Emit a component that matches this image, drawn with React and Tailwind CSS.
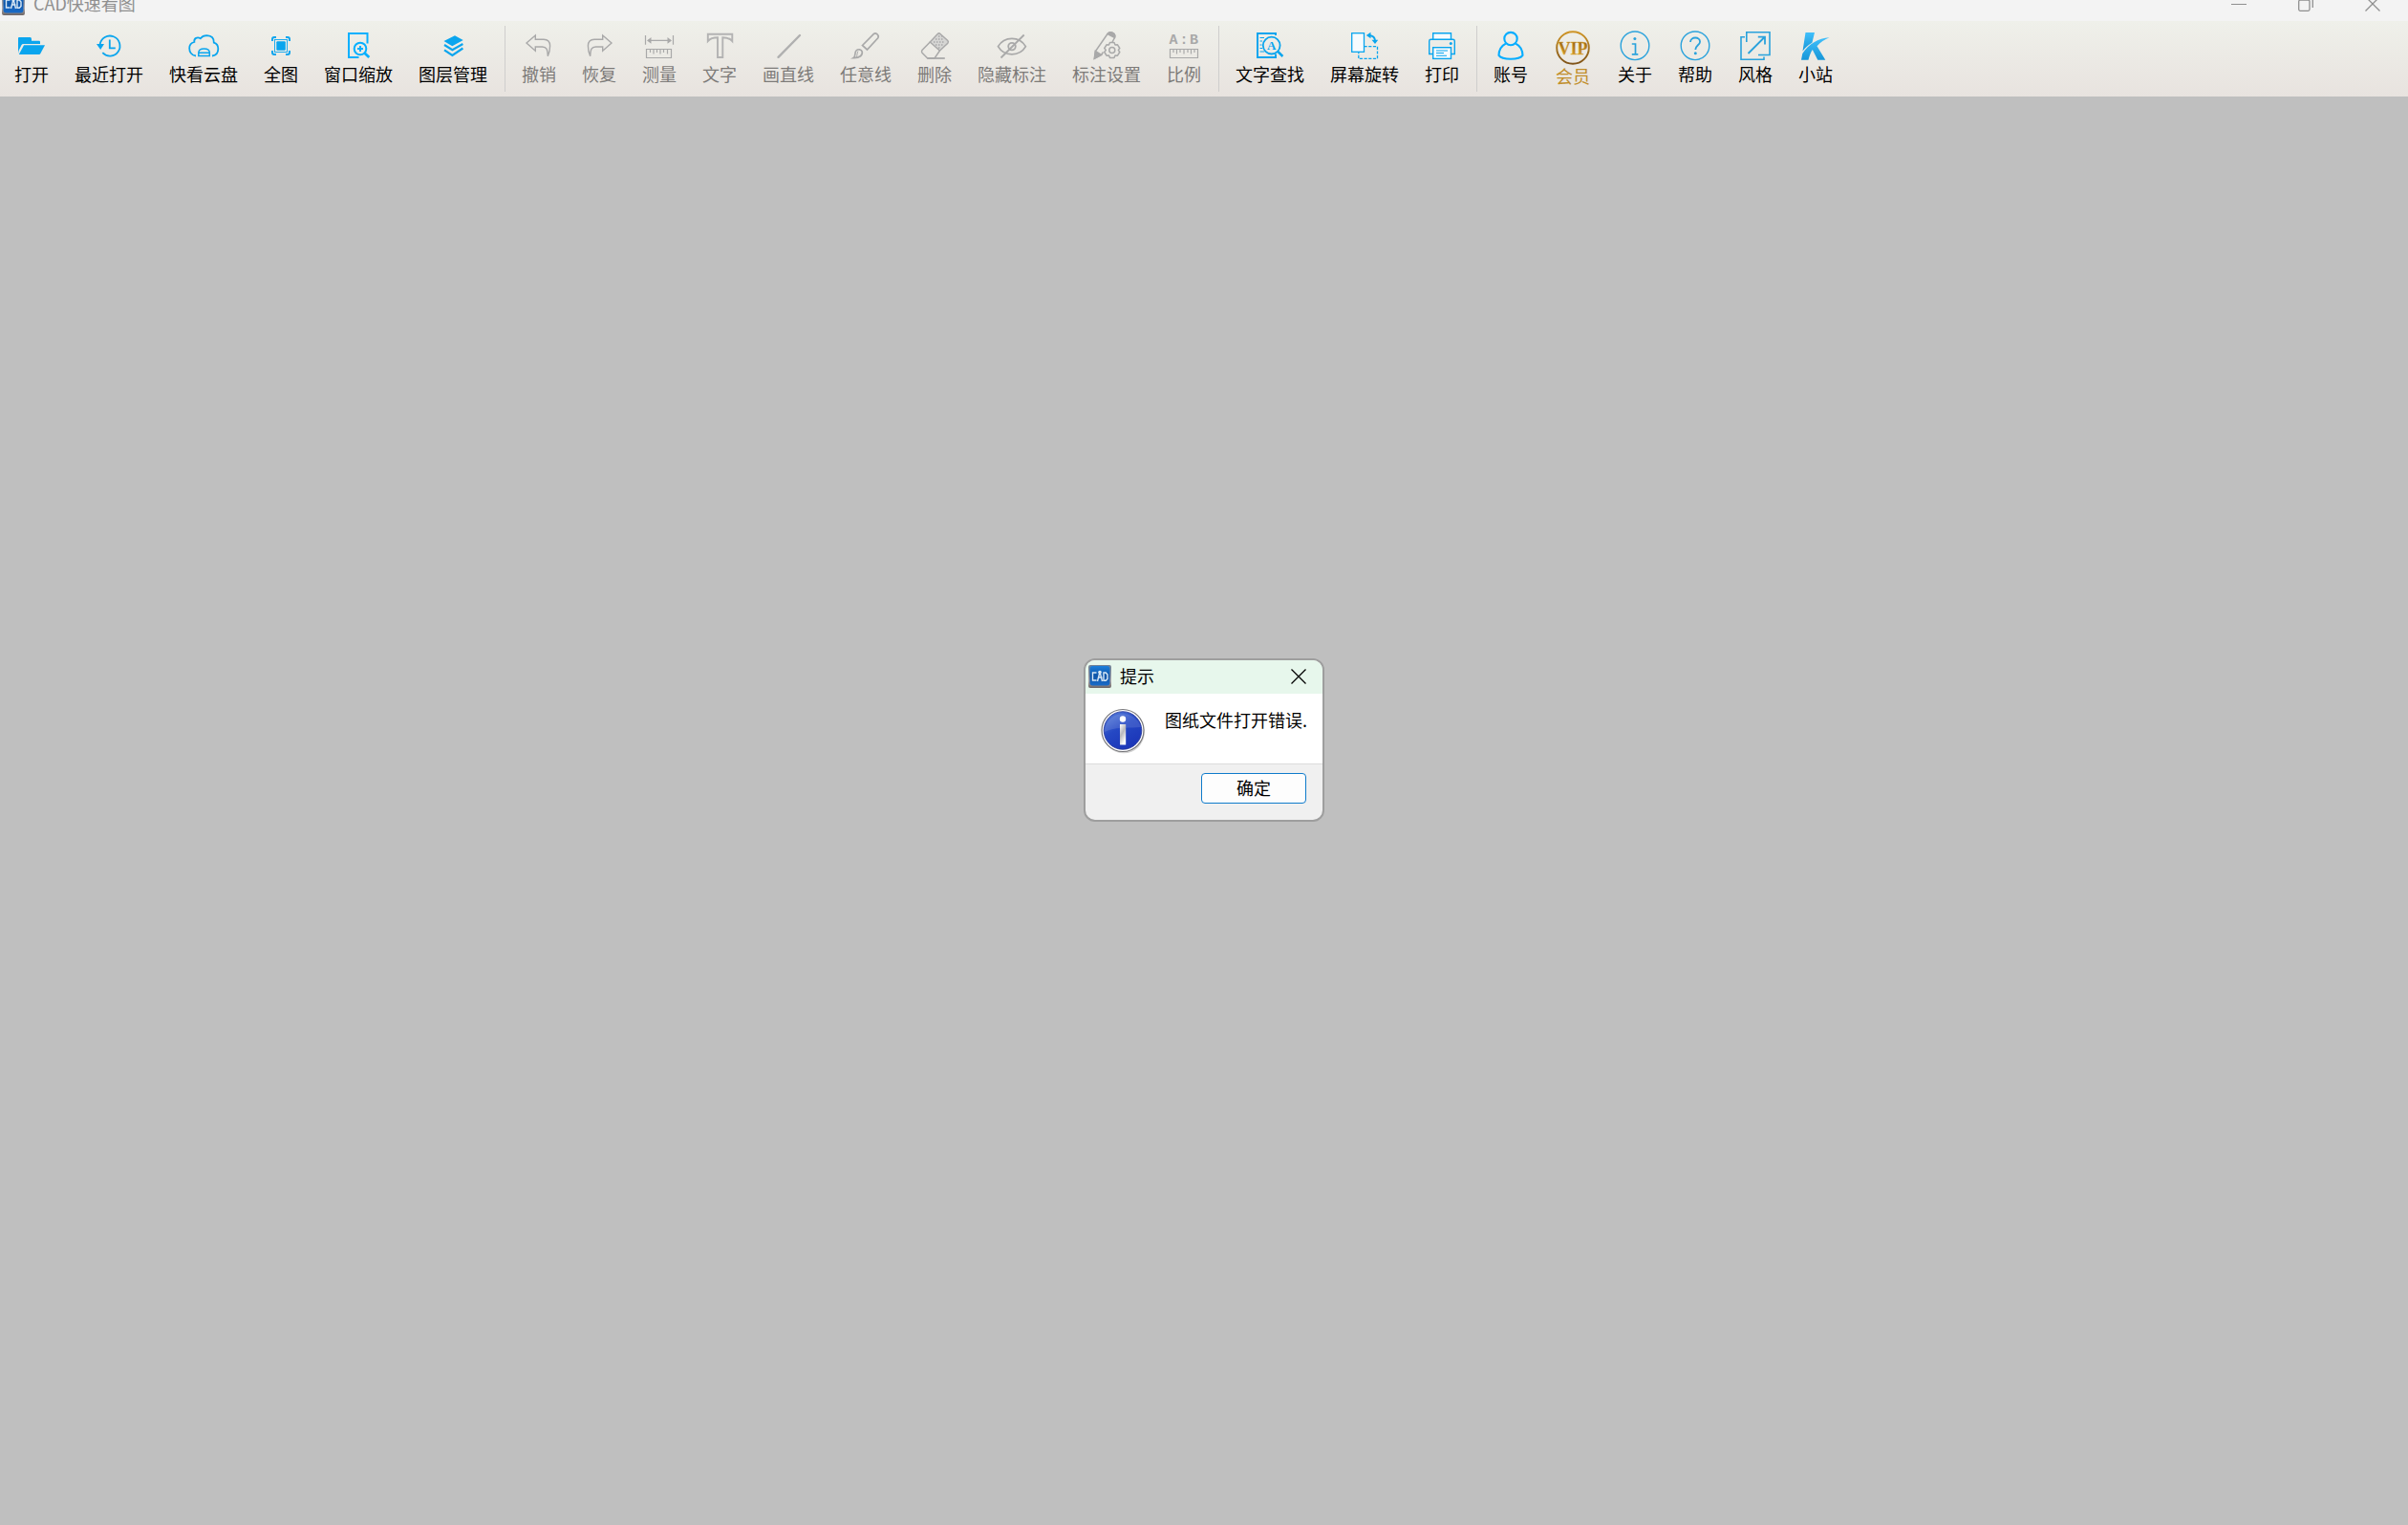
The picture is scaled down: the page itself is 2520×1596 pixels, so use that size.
import React from "react";

const BLUE = "#0aa5ee";
const GRAY = "#a9a9a9";

function Icon({ children, color = BLUE, width = 1.5, box = "0 0 36 36", className = "size-9" }) {
  return (
    <svg viewBox={box} className={className} fill="none" stroke={color} strokeWidth={width} aria-hidden="true">
      {children}
    </svg>
  );
}

const OpenIcon = () => (
  <Icon>
    <path d="M4 26V10Q4 9 5 9H16.5Q18 9 18 11V12.7H26Q27 12.7 27 14V16H9.5Q8 16 7.4 17.2L4.6 23Z" fill={BLUE} stroke="none" />
    <path d="M10 17.2H32L27.2 26.3Q26.8 27 26 27H4.8Z" fill={BLUE} stroke="none" />
  </Icon>
);

const RecentIcon = () => (
  <Icon width={1.8}>
    <path d="M11.3 25.2A10.5 10.5 0 1 0 8.6 16.6" />
    <path d="M5 16H13L9.2 22Z" fill={BLUE} stroke="none" />
    <path d="M18.8 11.5V20.3H24.8" />
  </Icon>
);

const CloudIcon = () => (
  <Icon width={1.8}>
    <path d="M10 28.500C5.500 28 3.200 24.500 3.200 20.500C3.200 17 5 14.800 8.300 14C7.800 10 11.500 8.300 14.800 10.300C16.500 8 18.800 7.200 21.500 7.200C26 7.500 29 10 28.800 14.600C32 15.500 33.300 18 33.300 21C33.300 25 31 28 27 28.500" />
    <path d="M12.800 28.500V25C13 22 15 21 18.500 21S24.300 22 24.300 25V28.500ZM12.800 25.200H24.300" strokeWidth="1.5" />
  </Icon>
);

const FullIcon = () => (
  <Icon width={2}>
    <path d="M9 13V11Q9 9 11 9H13M23 9H25Q27 9 27 11V13M27 23V25Q27 27 25 27H23M13 27H11Q9 27 9 25V23" />
    <rect x="11.500" y="11.500" width="13" height="13" strokeWidth="0.9" />
    <rect x="13.300" y="13.300" width="9.500" height="9.500" rx="1" fill={BLUE} stroke="none" />
  </Icon>
);

const ZoomWindowIcon = () => (
  <Icon width={2} color="#08b0ff">
    <path d="M18.500 30H8V5H27.500V15.500" />
    <circle cx="20" cy="21" r="6.300" />
    <path d="M24.500 25.500L29.300 30" strokeWidth="2.800" />
    <path d="M17 21H23M20 18V24" />
  </Icon>
);

const LayersIcon = () => (
  <Icon width={2.2}>
    <path d="M20 7.300L28.700 12L17.300 18.300L8.500 13Z" fill={BLUE} stroke="none" />
    <path d="M9 17L17.400 22.200L28.400 16" />
    <path d="M9 22.300L17.400 28L28.400 20.500" />
  </Icon>
);

const UNDO_PATH = "M5 15L14.300 7V11.300H23C28 11.500 29.600 14 29.600 18C29.600 21 28.500 26 27.300 28.800C27 21.500 26 19 21.500 19H14.300V23.300Z";
const UndoIcon = () => (
  <Icon color={GRAY} width={1.4}><path d={UNDO_PATH} /></Icon>
);
const RedoIcon = () => (
  <Icon color={GRAY} width={1.4}><path d={UNDO_PATH} transform="translate(36 0) scale(-1 1)" /></Icon>
);

const MeasureIcon = () => (
  <Icon color={GRAY} width={1.2}>
    <path d="M3.500 7V16.800M32.500 7V16.800M6 12.400H30" />
    <path d="M5 12.400L9.500 9V15.800ZM31 12.400L26.500 9V15.800Z" fill={GRAY} stroke="none" />
    <path d="M4.500 21.500H30.500V30.500H4.500ZM8.500 22V25M12 22V26.500M15.500 22V25M19 22V26.500M22.500 22V25M26.500 22V26.500" />
  </Icon>
);

const TextIcon = () => (
  <Icon color="#b3b3b3" width={1.9}>
    <path d="M5.800 5.800H31.300V13C29 10.500 26 9.200 21.300 9.200V30H16V9.200C11 9.200 8 10.500 5.800 13Z" />
  </Icon>
);

const LineIcon = () => (
  <Icon color="#b0b0b0" width={2.4}><path d="M7.500 29.800L30 7" strokeLinecap="round" /></Icon>
);

const BrushIcon = () => (
  <Icon color={GRAY} width={1.7}>
    <path d="M14.500 17.500L26.500 5.500C28.500 3.800 32.500 7 30.800 9.800L19.500 22Z" />
    <path d="M5 30.700C8 29 6 25 8 23C10 21 13.500 21.500 14.200 24C15 27.500 12 31 5 30.700Z" />
    <path d="M10 23.500C8.800 25 9.300 28 8.200 30" strokeWidth="1" />
  </Icon>
);

const EraserIcon = () => (
  <Icon color={GRAY} width={1.5}>
    <path d="M13.300 14L21.300 5.500Q22.700 4.300 24 5.500L31.800 12.500Q33 13.800 31.800 15.200L23.500 23Z" fill="#d6d6d4" />
    <path d="M13.300 14L5 22.500Q4 24 5 25.200L10.700 31H18L23.500 23" />
    <path d="M10.500 31H28.800" strokeWidth="1.8" />
    <path d="M17 14H29M19 11H28M19 17H27M22 8H26M22 20H25" strokeDasharray="1.500 1.500" strokeWidth="1.300" />
  </Icon>
);

const HideIcon = () => (
  <Icon color={GRAY} width={1.8}>
    <path d="M3.500 18.600C10 7.500 26 7.500 32.400 18.600C26 29.500 10 29.500 3.500 18.600Z" />
    <circle cx="18" cy="18.600" r="3.800" />
    <path d="M6.500 30.500L30.700 6.500" />
  </Icon>
);

const AnnotateIcon = () => (
  <Icon color={GRAY} width={1.5}>
    <path d="M19 5.500C22 2 28 5 26.500 9.500L24 14M19 5.500L6.500 23.500L5.500 31L12.500 27.500L14.500 24.500" />
    <path d="M19 5.500C22 2 28 5 26.500 9.500ZM6.300 23.500L12.500 27.500L5.300 31.500Z" fill={GRAY} />
    <path d="M21.500 14.500H26L27 17L29.500 16.800L31.800 20.500L30.300 22.400L31.800 24.500L29.500 28.200L27 28L26 30.400H21.500L20.500 28L18 28.200L15.800 24.500L17.300 22.400L15.800 20.500L18 16.800L20.500 17Z" strokeLinejoin="round" />
    <circle cx="23.800" cy="22.400" r="3" />
  </Icon>
);

const RatioIcon = () => (
  <Icon color={GRAY} width={1.2}>
    <g fill={GRAY} stroke="none" className="font-['Liberation_Mono'] text-[15px] font-bold" textAnchor="middle">
      <text x="7" y="15.700">A</text>
      <text x="18" y="15.700">:</text>
      <text x="28.500" y="15.700">B</text>
    </g>
    <path d="M3.500 21.500H32.500V30.500H3.500ZM7 22V25M10.500 22V26.500M14 22V25M18 22V26.500M22 22V25M25.500 22V26.500M29 22V25" />
  </Icon>
);

const FindIcon = () => (
  <Icon>
    <path d="M24 7V5H5V30H24V26.500" strokeWidth="2" />
    <path d="M7.500 9.500H12M7.500 13H10M7.500 17H9.500M7.500 20.500H10M7.500 24H12" strokeWidth="1" />
    <circle cx="19.700" cy="17.600" r="8.900" strokeWidth="1.800" />
    <path d="M26 23.700L31.400 29" strokeWidth="2.500" />
    <text x="19.700" y="22" textAnchor="middle" fill={BLUE} stroke="none" className="font-['Liberation_Serif'] text-[13px] font-bold">A</text>
  </Icon>
);

const RotateIcon = () => (
  <Icon width={1.3}>
    <rect x="4.700" y="4.700" width="12.800" height="19.600" fill="#f6fbfe" />
    <path d="M17.500 18.600H31.500V31.400H11.800V24.500" strokeDasharray="3.200 1.500" />
    <path d="M23 7C27 7.500 29 9.500 29.200 13" strokeWidth="1.800" />
    <path d="M19.800 7L24.500 3.800V10.200ZM29 16L25.500 11.700H32.200Z" fill={BLUE} stroke="none" />
  </Icon>
);

const PrintIcon = () => (
  <Icon width={1.4}>
    <path d="M8.700 11V4.700H27.500V11" fill="#f6fbfe" />
    <path d="M8.500 26.500H4.700V13Q4.700 11.300 6.500 11.300H29.500Q31.300 11.300 31.300 13V26.500H27.500" />
    <rect x="8.700" y="19.700" width="18.800" height="11.700" fill="#f6fbfe" />
    <path d="M12 23H24M12 25.500H20M12 28.200H23" strokeWidth="1.100" />
    <circle cx="27.300" cy="15.400" r="1.500" fill={BLUE} stroke="none" />
  </Icon>
);

const AccountIcon = () => (
  <Icon color="#06adff" width={2.1}>
    <circle cx="18" cy="10.600" r="6.700" />
    <path d="M12.800 15.600C8 18 5.700 22.500 5.500 27.800C9 33 27 33 30.500 27.800C30.300 22.500 28 18 23.200 15.600" />
  </Icon>
);

const VipIcon = () => (
  <Icon box="0 0 40 38" className="h-[38px] w-10" color="url(#vipGold)" width={1.9}>
    <defs>
      <linearGradient id="vipGold" x1="0" y1="0" x2="0" y2="1">
        <stop offset="0" stopColor="#cf9526" />
        <stop offset="1" stopColor="#805419" />
      </linearGradient>
      <linearGradient id="vipText" x1="0" y1="0" x2="0" y2="1">
        <stop offset="0" stopColor="#8a5a10" />
        <stop offset="1" stopColor="#dba22c" />
      </linearGradient>
    </defs>
    <circle cx="20" cy="20" r="16.800" />
    <text x="20" y="26.500" textAnchor="middle" fill="url(#vipText)" stroke="#e0b040" strokeWidth="0.400" className="font-['Liberation_Serif'] text-[18px] font-bold">VIP</text>
  </Icon>
);

const AboutIcon = () => (
  <Icon color="#2aa2dc" width={1.4}>
    <circle cx="18" cy="17.800" r="14.800" />
    <path d="M14.800 16H18.500V26.700M14.800 26.900H21.300" strokeWidth="1.700" />
    <circle cx="17.900" cy="10.600" r="1.500" fill="#2aa2dc" stroke="none" />
  </Icon>
);

const HelpIcon = () => (
  <Icon color="#2aa2dc" width={1.4}>
    <circle cx="18" cy="17.800" r="14.800" />
    <path d="M13 14C13 8 23.500 8 23 14C22.700 17.300 18.300 17.500 18.300 22" strokeWidth="1.800" />
    <circle cx="18.300" cy="25.700" r="1.500" fill="#2aa2dc" stroke="none" />
  </Icon>
);

const StyleIcon = () => (
  <Icon color="#2aa2dc" width={1.6}>
    <path d="M8.800 14V3.700H33V27.500H21" />
    <path d="M7 8.700H3V32.200H27V29.500" />
    <path d="M10.500 26L28 8.500M20.800 8.700H28V16.500" strokeWidth="1.800" />
  </Icon>
);

const SiteIcon = () => (
  <Icon>
    <defs>
      <linearGradient id="siteBlue" x1="0" y1="0" x2="0" y2="1">
        <stop offset="0" stopColor="#41c0fb" />
        <stop offset="1" stopColor="#1696d8" />
      </linearGradient>
    </defs>
    <g fill="url(#siteBlue)" stroke="none">
      <path d="M7.500 4H17L14.400 14.800C10.500 17 7.400 19.800 4.500 23.500Z" />
      <path d="M3 32.700L4.300 26C11 16 20.500 10.200 32.500 9.300C27.500 11.300 22.800 14.500 19.500 18.300L28.300 32.700H20.300L14.800 22C12.800 25 11.500 28.500 10.500 32.700Z" />
    </g>
  </Icon>
);

const AppLogo = () => (
  <svg viewBox="0 0 24 24" className="size-6 shrink-0" aria-hidden="true">
    <defs>
      <linearGradient id="logoBlue" x1="0" y1="0" x2="0" y2="1">
        <stop offset="0" stopColor="#1c7fdc" />
        <stop offset="0.5" stopColor="#0f55a8" />
        <stop offset="1" stopColor="#1a6cc8" />
      </linearGradient>
      <linearGradient id="logoFrame" x1="0" y1="0" x2="0" y2="1">
        <stop offset="0" stopColor="#6f7f95" />
        <stop offset="0.7" stopColor="#b0a8a8" />
        <stop offset="1" stopColor="#6a6466" />
      </linearGradient>
    </defs>
    <rect width="24" height="24" rx="2" fill="url(#logoFrame)" />
    <rect x="1.500" y="1" width="21" height="20.500" rx="3" fill="url(#logoBlue)" />
    <g fill="none" stroke="#d9e8f5" strokeWidth="1.400">
      <path d="M8.500 8H4.500V16H8.500M9.500 17L12 7L14.500 17M10 13H14.500M16 8H18.300L20 10V14.500L18.300 16.300H16Z" />
    </g>
    <circle cx="12" cy="7.500" r="1.800" fill="#d9e8f5" />
  </svg>
);

const InfoBadge = () => (
  <svg viewBox="0 0 48 48" className="size-12 shrink-0" aria-hidden="true">
    <defs>
      <linearGradient id="infoBlue" x1="0" y1="0" x2="0.6" y2="1">
        <stop offset="0" stopColor="#5f86dc" />
        <stop offset="0.5" stopColor="#2548c4" />
        <stop offset="1" stopColor="#1b36b8" />
      </linearGradient>
      <linearGradient id="infoStem" x1="0" y1="0" x2="0.500" y2="1">
        <stop offset="0" stopColor="#ffffff" />
        <stop offset="0.5" stopColor="#b9b9bd" />
        <stop offset="1" stopColor="#ffffff" />
      </linearGradient>
    </defs>
    <circle cx="25" cy="25.500" r="21.800" fill="#000" opacity="0.18" />
    <circle cx="24" cy="23.500" r="22" fill="#fff" stroke="#77777b" strokeWidth="1.200" />
    <circle cx="24" cy="23.500" r="19.800" fill="url(#infoBlue)" stroke="#22339a" strokeWidth="0.8" />
    <path d="M4.800 25A19.500 19.500 0 0 1 43 20C30 21 16 19.500 4.800 25Z" fill="#fff" opacity="0.12" />
    <circle cx="24" cy="11.500" r="3.200" fill="#fff" />
    <rect x="21" y="17" width="6.200" height="21.500" fill="url(#infoStem)" />
  </svg>
);

const groups = [
  [
    ["打开", OpenIcon],
    ["最近打开", RecentIcon],
    ["快看云盘", CloudIcon],
    ["全图", FullIcon],
    ["窗口缩放", ZoomWindowIcon],
    ["图层管理", LayersIcon],
  ],
  [
    ["撤销", UndoIcon],
    ["恢复", RedoIcon],
    ["测量", MeasureIcon],
    ["文字", TextIcon],
    ["画直线", LineIcon],
    ["任意线", BrushIcon],
    ["删除", EraserIcon],
    ["隐藏标注", HideIcon],
    ["标注设置", AnnotateIcon],
    ["比例", RatioIcon],
  ],
  [
    ["文字查找", FindIcon],
    ["屏幕旋转", RotateIcon],
    ["打印", PrintIcon],
  ],
  [
    ["账号", AccountIcon],
    ["会员", VipIcon],
    ["关于", AboutIcon],
    ["帮助", HelpIcon],
    ["风格", StyleIcon],
    ["小站", SiteIcon],
  ],
];

function Tool({ label, Glyph, disabled }) {
  const tone = disabled ? "text-[#7d7b79]" : label === "会员" ? "text-[#c18e2c]" : "text-black";
  return (
    <button type="button" disabled={disabled} className={`flex shrink-0 flex-col items-center gap-px ${tone}`}>
      <Glyph />
      <span className="whitespace-nowrap text-[18px] leading-5">{label}</span>
    </button>
  );
}

function CrossIcon() {
  return (
    <svg viewBox="0 0 16 16" className="size-4" fill="none" stroke="currentColor" strokeWidth="1.3" aria-hidden="true">
      <path d="M0.500 0.500L15.500 15.500M15.500 0.500L0.500 15.500" />
    </svg>
  );
}

export default function App() {
  return (
    <div className="relative flex min-h-screen flex-col overflow-hidden bg-[#bfbfbf] font-['Noto_Sans_CJK_SC',sans-serif]">
      <header className="h-[22px] overflow-hidden bg-[#f3f3f3]">
        <div className="-mt-[18px] flex h-11 items-center pl-0.5 pr-0.5 text-[#8f8f8f]">
          <AppLogo />
          <h1 className="ml-[9px] pb-0.5 text-[18px] leading-6">CAD快速看图</h1>
          <div className="ml-auto flex h-full">
            <button type="button" aria-label="最小化" className="flex w-[70px] items-center justify-center">
              <svg viewBox="0 0 16 16" className="size-4" stroke="currentColor" aria-hidden="true"><path d="M0 8.500H16" /></svg>
            </button>
            <button type="button" aria-label="还原" className="flex w-[70px] items-center justify-center">
              <svg viewBox="0 0 16 16" className="size-4" fill="none" stroke="currentColor" strokeWidth="1.3" aria-hidden="true">
                <rect x="0.700" y="4" width="11.300" height="11.300" rx="1.500" />
                <path d="M4 0.700H12Q15.300 0.700 15.300 4V12" />
              </svg>
            </button>
            <button type="button" aria-label="关闭" className="flex w-[70px] items-center justify-center">
              <CrossIcon />
            </button>
          </div>
        </div>
      </header>

      <nav aria-label="工具栏" className="flex h-[79px] bg-linear-to-b from-[#eff0ea] to-[#e8e3df] py-[5px]">
        {groups.map((tools, g) => (
          <div
            key={g}
            className={`flex items-start gap-[27px] pt-[3px] pr-[18px] ${g === 0 ? "pl-[15px]" : "pl-[17px]"} ${g < 3 ? "border-r border-[#cfcecd]" : ""}`}
          >
            {tools.map(([label, Glyph]) => (
              <Tool key={label} label={label} Glyph={Glyph} disabled={g === 1} />
            ))}
          </div>
        ))}
      </nav>

      <main className="flex-1" />

      <div className="absolute inset-0 flex items-center justify-center pb-[47px]">
        <section
          role="dialog"
          aria-labelledby="dialog-title"
          className="flex w-[252px] flex-col overflow-hidden rounded-xl border-2 border-[#9e9e9e] bg-[#f0f0f0] text-[18px] text-black"
        >
          <div className="flex h-[35px] items-center bg-[#e7f7ec] pb-0.5 pl-[3px] pr-[17px]">
            <AppLogo />
            <h2 id="dialog-title" className="ml-[9px] pb-0.5 leading-6">提示</h2>
            <button type="button" aria-label="关闭" className="ml-auto"><CrossIcon /></button>
          </div>
          <div className="flex items-start gap-5 border-b border-[#dcdcdc] bg-white pb-[10px] pl-[15px] pt-[15px]">
            <InfoBadge />
            <p className="whitespace-nowrap leading-6">图纸文件打开错误.</p>
          </div>
          <div className="flex justify-end pb-[17px] pr-[17px] pt-[9px]">
            <button type="button" className="h-8 w-[110px] rounded border border-[#0f7bcb] bg-[#fdfdfd] pb-0.5 leading-6">确定</button>
          </div>
        </section>
      </div>
    </div>
  );
}
